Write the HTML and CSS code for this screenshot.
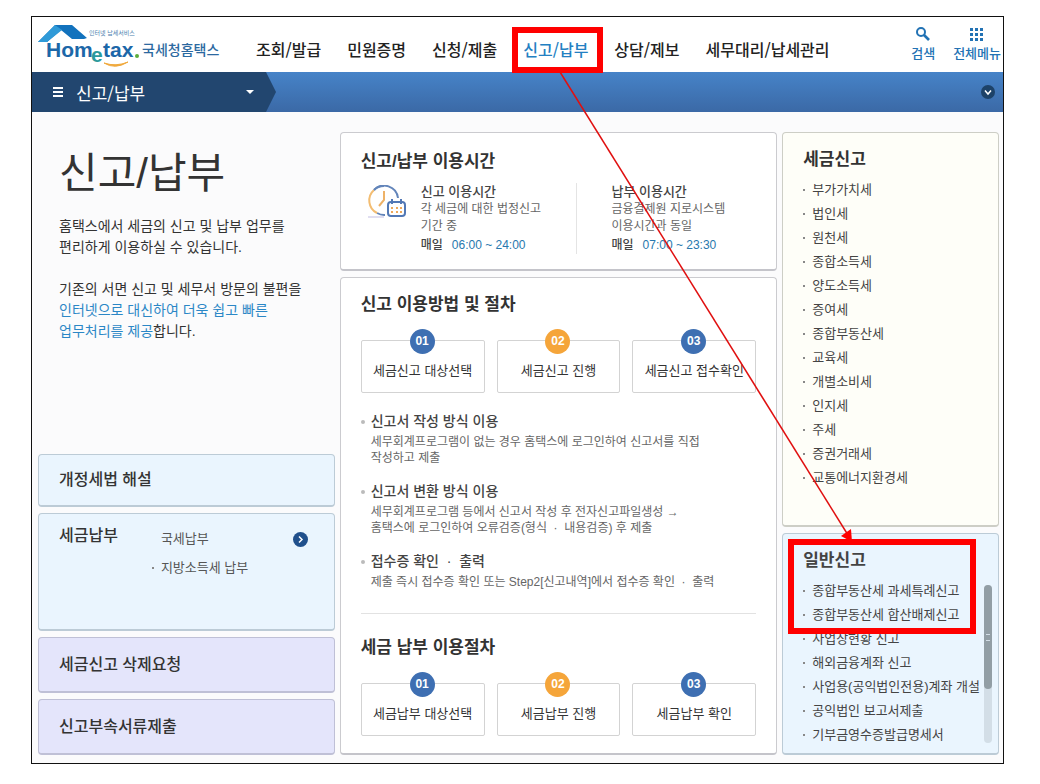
FILE: index.html
```html
<!DOCTYPE html>
<html lang="ko">
<head>
<meta charset="utf-8">
<meta name="viewport" content="width=device-width, initial-scale=1">
<title>국세청홈택스 - 신고/납부</title>
<link rel="stylesheet" href="styles.css">
</head>
<body>
<div class="frame">
  <header class="header">
    <a class="logo" href="#" aria-label="Hometax 국세청홈택스">
      <svg width="184" height="55" viewBox="0 0 184 55">
        <path d="M0 25 17 8H34L49 21 46 22H34L23 13 9 25Z" fill="#1272bd"/>
        <path d="M0 25 17 8 24 13 9 25Z" fill="#2f9ad8"/>
        <text class="logo-tiny" x="51" y="18">인터넷 납세서비스</text>
        <text class="logo-word" x="8" y="40">Hom</text>
        <text class="logo-e" x="53" y="45">e</text>
        <text class="logo-word" x="65" y="40">tax</text>
        <circle cx="99" cy="39" r="2" fill="#5cae3c"/>
        <path d="M66 46Q77 53 90 45Q78 50 66 46Z" fill="#f0a93c" stroke="#f0a93c"/>
        <text class="logo-ko" x="104" y="38">국세청홈택스</text>
      </svg>
    </a>
    <nav class="nav">
      <a href="#">조회/발급</a>
      <a href="#">민원증명</a>
      <a href="#">신청/제출</a>
      <a class="current" href="#">신고/납부</a>
      <a href="#">상담/제보</a>
      <a href="#">세무대리/납세관리</a>
    </nav>
    <div class="tools">
      <button class="tool" type="button">
        <svg width="16" height="16" viewBox="0 0 16 16" fill="none" stroke="#2272b4"><circle cx="6" cy="6" r="4" stroke-width="2"/><path d="M9 9 14 14" stroke-width="2.6"/></svg>
        <span>검색</span>
      </button>
      <button class="tool" type="button">
        <svg width="16" height="16" viewBox="0 0 16 16" fill="#2272b4"><path d="M1 2h3v3H1zM6 2h3v3H6zM11 2h3v3h-3zM1 7h3v3H1zM6 7h3v3H6zM11 7h3v3h-3zM1 12h3v3H1zM6 12h3v3H6zM11 12h3v3h-3z"/></svg>
        <span>전체메뉴</span>
      </button>
    </div>
  </header>

  <div class="subnav">
    <button class="crumb" type="button">
      <svg width="10" height="10" viewBox="0 0 10 10" fill="#fff"><path d="M0 0h10v2H0zM0 4h10v2H0zM0 8h10v2H0z"/></svg>
      <span>신고/납부</span>
      <svg class="caret" width="8" height="4" viewBox="0 0 8 4" fill="#fff"><path d="M0 0h8L4 4z"/></svg>
    </button>
    <button class="fold" type="button" aria-label="펼치기">
      <svg width="14" height="14" viewBox="0 0 14 14"><circle cx="7" cy="7" r="7" fill="#1d4268"/><path d="M4 5.500 7 9 10 5.500" fill="none" stroke="#fff" stroke-width="1.500"/></svg>
    </button>
  </div>

  <main class="main">
    <div class="left">
      <section class="intro">
        <h1>신고/납부</h1>
        <p>홈택스에서 세금의 신고 및 납부 업무를<br>편리하게 이용하실 수 있습니다.</p>
        <p>기존의 서면 신고 및 세무서 방문의 불편을<br><em>인터넷으로 대신하여 더욱 쉽고 빠른<br>업무처리를 제공</em>합니다.</p>
      </section>
      <section class="card blue short"><h2>개정세법 해설</h2></section>
      <section class="card blue pay">
        <h2>세금납부</h2>
        <ul class="links">
          <li class="plain"><a href="#">국세납부</a></li>
          <li><a href="#">지방소득세 납부</a></li>
        </ul>
        <button class="go" type="button" aria-label="국세납부 바로가기">
          <svg width="15" height="15" viewBox="0 0 15 15"><circle cx="7.500" cy="7.500" r="7.500" fill="#20508c"/><path d="M6 4.500 9 7.500 6 10.500" fill="none" stroke="#fff" stroke-width="1.500"/></svg>
        </button>
      </section>
      <section class="card violet"><h2>세금신고 삭제요청</h2></section>
      <section class="card violet"><h2>신고부속서류제출</h2></section>
    </div>

    <div class="center">
      <section class="card hours">
        <h2 class="title">신고/납부 이용시간</h2>
        <div class="times">
          <svg class="clock" width="40" height="34" viewBox="0 0 40 34" fill="none" stroke-width="2">
            <path d="M1 32H17" stroke="#d6d3ec" stroke-width="1.500"/>
            <path d="M7 5A14 14 0 0 1 31 13M10 28A14 14 0 0 0 18 30" stroke="#6385ba"/>
            <path d="M7 5A14 14 0 0 0 10 28" stroke="#f3bd72"/>
            <path d="M7 5A14 14 0 0 1 17 1" stroke="#6385ba"/>
            <path d="M17 6V15L12 21" stroke="#eeb267"/>
            <rect x="21" y="17" width="17" height="14" rx="3" fill="#fff" stroke="#5278b5"/>
            <path d="M25 14v5M34 14v5" stroke="#5278b5"/>
            <path d="M24 23h2M29 23h2M33 23h2M24 27h2M29 27h2M33 27h2" stroke="#eda85b"/>
          </svg>
          <div class="time">
            <h3>신고 이용시간</h3>
            <p>각 세금에 대한 법정신고<br>기간 중</p>
            <p class="daily"><b>매일</b><span>06:00 ~ 24:00</span></p>
          </div>
          <div class="time second">
            <h3>납부 이용시간</h3>
            <p>금융결제원 지로시스템<br>이용시간과 동일</p>
            <p class="daily"><b>매일</b><span>07:00 ~ 23:30</span></p>
          </div>
        </div>
      </section>

      <section class="card guide">
        <h2 class="title">신고 이용방법 및 절차</h2>
        <ol class="steps">
          <li><b>01</b>세금신고 대상선택</li>
          <li><b>02</b>세금신고 진행</li>
          <li><b>03</b>세금신고 접수확인</li>
        </ol>
        <dl class="notes">
          <dt>신고서 작성 방식 이용</dt>
          <dd>세무회계프로그램이 없는 경우 홈택스에 로그인하여 신고서를 직접<br>작성하고 제출</dd>
          <dt>신고서 변환 방식 이용</dt>
          <dd>세무회계프로그램 등에서 신고서 작성 후 전자신고파일생성 →<br>홈택스에 로그인하여 오류검증(형식 &nbsp;·&nbsp; 내용검증) 후 제출</dd>
          <dt>접수증 확인 &nbsp;·&nbsp; 출력</dt>
          <dd>제출 즉시 접수증 확인 또는 Step2[신고내역]에서 접수증 확인 &nbsp;·&nbsp; 출력</dd>
        </dl>
        <hr>
        <h2 class="title">세금 납부 이용절차</h2>
        <ol class="steps">
          <li><b>01</b>세금납부 대상선택</li>
          <li><b>02</b>세금납부 진행</li>
          <li><b>03</b>세금납부 확인</li>
        </ol>
      </section>
    </div>

    <div class="right">
      <section class="card cream">
        <h2 class="title">세금신고</h2>
        <ul class="links">
          <li><a href="#">부가가치세</a></li>
          <li><a href="#">법인세</a></li>
          <li><a href="#">원천세</a></li>
          <li><a href="#">종합소득세</a></li>
          <li><a href="#">양도소득세</a></li>
          <li><a href="#">증여세</a></li>
          <li><a href="#">종합부동산세</a></li>
          <li><a href="#">교육세</a></li>
          <li><a href="#">개별소비세</a></li>
          <li><a href="#">인지세</a></li>
          <li><a href="#">주세</a></li>
          <li><a href="#">증권거래세</a></li>
          <li><a href="#">교통에너지환경세</a></li>
        </ul>
      </section>
      <section class="card blue general">
        <h2 class="title">일반신고</h2>
        <ul class="links">
          <li><a href="#">종합부동산세 과세특례신고</a></li>
          <li><a href="#">종합부동산세 합산배제신고</a></li>
          <li><a href="#">사업장현황 신고</a></li>
          <li><a href="#">해외금융계좌 신고</a></li>
          <li><a href="#">사업용(공익법인전용)계좌 개설</a></li>
          <li><a href="#">공익법인 보고서제출</a></li>
          <li><a href="#">기부금영수증발급명세서</a></li>
        </ul>
        <div class="scroll" aria-hidden="true"><div class="thumb"></div></div>
        <div class="mark" aria-hidden="true"></div>
      </section>
    </div>
  </main>

  <svg class="pointer" viewBox="0 0 971 746" preserveAspectRatio="none" aria-hidden="true">
    <path d="M528 55 816 518" stroke="#e01010" stroke-width="1.500"/>
    <path d="M820 525 809 519 819 512Z" fill="#f00"/>
  </svg>
</div>
</body>
</html>
```

FILE: styles.css
```css
* {
  box-sizing: border-box;
}

body {
  margin: 0;
  padding: 16px 36px 20px 31px;
  background: #fff;
  color: #333;
  font-family: "Liberation Sans", "Noto Sans CJK KR", sans-serif;
  font-size: 13px;
}

h1, h2, h3, p, ul, ol, dl, dd {
  margin: 0;
  padding: 0;
}

ul, ol {
  list-style: none;
}

a {
  color: inherit;
  text-decoration: none;
}

button {
  padding: 0;
  border: 0;
  background: none;
  font: inherit;
  color: inherit;
}

svg {
  display: block;
}

.frame {
  position: relative;
  border: 1px solid #111;
  background: #fbfbfc;
}

.header {
  display: flex;
  height: 55px;
  padding: 0 2px 0 6px;
  background: #fff;
  font-family: "Noto Sans CJK KR", sans-serif;
}

.logo-tiny {
  font-size: 6px;
  fill: #4a7fae;
}

.logo-word,
.logo-e {
  font-family: "Liberation Sans", sans-serif;
  font-size: 21px;
  font-weight: 700;
  fill: #1c67a8;
}

.logo-e {
  fill: #2b9a9c;
}

.logo-ko {
  font-size: 14px;
  font-weight: 500;
  fill: #2c69a0;
}

.nav {
  display: flex;
  align-items: center;
  gap: 26px;
  margin-left: 34px;
  padding-top: 8px;
  font-size: 16px;
  font-weight: 500;
  line-height: 24px;
  color: #222;
  white-space: nowrap;
}

.current {
  position: relative;
  color: #2380c2;
}

.current::after {
  content: "";
  position: absolute;
  inset: -10px -15px -12px -11px;
  border: 6px solid #f00;
}

.tools {
  display: flex;
  gap: 18px;
  margin-left: auto;
  padding-top: 9px;
  color: #2272b4;
  white-space: nowrap;
}

.tool {
  display: flex;
  flex-direction: column;
  align-items: center;
  font-size: 13px;
  font-weight: 500;
  line-height: 22px;
}

.subnav {
  display: flex;
  align-items: center;
  justify-content: space-between;
  height: 40px;
  padding-right: 8px;
  background: linear-gradient(#4683c8, #3b69a6);
}

.crumb {
  display: flex;
  align-items: center;
  width: 244px;
  height: 40px;
  padding: 0 22px 0 21px;
  background: #22466f;
  clip-path: polygon(0 0, 234px 0, 100% 50%, 234px 100%, 0 100%);
  color: #fff;
  font-family: "Noto Sans CJK KR", sans-serif;
  font-size: 17px;
}

.crumb span {
  margin-left: 13px;
}

.caret {
  margin-left: auto;
}

.main {
  display: grid;
  grid-template-columns: 297fr 438fr 216fr;
  gap: 5px;
  padding: 20px 4px 8px 6px;
}

.left,
.center,
.right {
  display: flex;
  flex-direction: column;
  gap: 6px;
}

.card {
  position: relative;
  border: 1px solid #cbcbcf;
  border-bottom: 2px solid #c4c4ca;
  border-radius: 4px;
  background: #fff;
}

.blue {
  border-color: #bccbd6;
  background: #eaf5fe;
}

.violet {
  display: flex;
  align-items: center;
  height: 56px;
  padding-left: 20px;
  border-color: #bfc0d6;
  background: #e4e5fb;
}

.cream {
  border-color: #cdcec6;
  background: #fefef8;
}

.intro {
  flex: 1;
  padding: 14px 0 0 21px;
  font-size: 14px;
  line-height: 21px;
}

.intro h1 {
  margin-bottom: 14px;
  font-size: 42px;
  font-weight: 400;
  line-height: 56px;
}

.intro p {
  margin-bottom: 21px;
}

.intro em {
  font-style: normal;
  color: #2b87c6;
}

.left h2 {
  font-size: 16px;
  font-weight: 500;
  line-height: 24px;
}

.short {
  display: flex;
  align-items: center;
  height: 53px;
  padding-left: 20px;
}

.pay {
  display: flex;
  align-items: flex-start;
  height: 118px;
  padding: 10px 26px 0 20px;
}

.pay .links {
  margin: 0 0 0 34px;
  line-height: 29px;
  color: #555;
}

.go {
  margin: 8px 0 0 auto;
}

.title {
  font-size: 17px;
  font-weight: 700;
  line-height: 24px;
}

.hours {
  padding: 17px 20px 15px;
}

.times {
  display: flex;
  margin-top: 9px;
  font-size: 12px;
  line-height: 17px;
  color: #666;
}

.clock {
  width: 40px;
  margin: 2px 14px 0 6px;
}

.time {
  flex: 156;
}

.second {
  flex: 145;
  padding-left: 34px;
  border-left: 1px solid #e4e4e4;
}

.time h3 {
  font-size: 13px;
  font-weight: 500;
  line-height: 18px;
  color: #444;
}

.daily {
  display: flex;
  gap: 9px;
  margin-top: 1px;
  font-size: 12px;
  line-height: 18px;
  color: #2878ae;
}

.daily b {
  font-weight: 500;
  color: #444;
}

.guide {
  flex: 1;
  padding: 15px 20px 17px;
}

.steps {
  display: grid;
  grid-template-columns: repeat(3, 1fr);
  gap: 12px;
  margin-top: 23px;
}

.steps li {
  position: relative;
  height: 53px;
  padding-top: 20px;
  border: 1px solid #d3d3d3;
  border-radius: 2px;
  text-align: center;
  font-size: 13px;
  line-height: 20px;
}

.steps b {
  position: absolute;
  top: -12px;
  left: calc(50% - 13px);
  width: 25px;
  height: 25px;
  border-radius: 50%;
  background: #3e6fb2;
  color: #fff;
  font-size: 12px;
  line-height: 25px;
}

.steps li:nth-child(2) b {
  background: #f5a53a;
}

.notes {
  margin-top: 18px;
  padding-left: 10px;
}

.notes dt {
  position: relative;
  font-size: 14px;
  font-weight: 500;
  line-height: 20px;
  color: #444;
}

.notes dt::before {
  content: "";
  position: absolute;
  top: 9px;
  left: -10px;
  width: 4px;
  height: 4px;
  border-radius: 50%;
  background: #bbb;
}

.notes dd {
  margin: 3px 0 15px;
  font-size: 12px;
  line-height: 16px;
  color: #666;
  white-space: nowrap;
}

.guide hr {
  height: 1px;
  margin: 23px 0 22px;
  border: 0;
  background: #e2e2e2;
}

.links {
  line-height: 24px;
  color: #444;
  white-space: nowrap;
}

.links li {
  display: flex;
  align-items: center;
  gap: 7px;
}

.links li::before {
  content: "";
  width: 2px;
  height: 2px;
  background: #888;
}

.links .plain::before {
  background: none;
}

.cream {
  flex: 1;
  padding: 15px 20px 34px;
}

.cream .links,
.general .links {
  margin-top: 6px;
}

.general {
  padding: 15px 18px 6px 20px;
}

.general .title {
  font-weight: 700;
  color: #444;
}

.scroll {
  position: absolute;
  top: 51px;
  right: 6px;
  bottom: 10px;
  width: 8px;
  border-radius: 4px;
  background: #d3dee7;
}

.thumb {
  height: 104px;
  border-radius: 4px;
  background: #929ea5;
}

.thumb::after {
  content: "";
  position: absolute;
  top: 49px;
  left: 2px;
  width: 4px;
  height: 5px;
  border-top: 1px solid #d3dee7;
  border-bottom: 1px solid #d3dee7;
}

.mark {
  position: absolute;
  top: 5px;
  left: 5px;
  right: 22px;
  height: 95px;
  border: 6px solid #f00;
}

.pointer {
  position: absolute;
  inset: 0;
  width: 100%;
  height: 100%;
  pointer-events: none;
}
```
